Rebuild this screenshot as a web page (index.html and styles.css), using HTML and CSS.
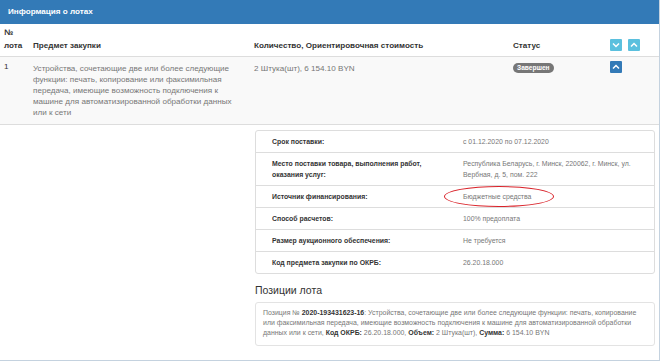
FILE: index.html
```html
<!DOCTYPE html>
<html lang="ru">
<head>
    <meta charset="UTF-8" />
    <title>Информация о лотах</title>
    <link rel="stylesheet" href="styles.css">
</head>
<body>
    <div class="panel">
        <div class="panel-heading">Информация о лотах</div>
        <table class="lots">
            <colgroup>
                <col class="c-num">
                <col class="c-subj">
                <col class="c-qty">
                <col class="c-status">
                <col class="c-act">
            </colgroup>
            <thead>
                <tr>
                    <th>№<br>лота</th>
                    <th>Предмет закупки</th>
                    <th>Количество, Ориентировочная стоимость</th>
                    <th>Статус</th>
                    <th class="act">
                        <span class="btn btn-info"><svg viewBox="0 0 10 10"><path d="M2.5 3.8 L5 6.2 L7.5 3.8"/></svg></span>
                        <span class="btn btn-info"><svg viewBox="0 0 10 10"><path d="M2.5 6.2 L5 3.8 L7.5 6.2"/></svg></span>
                    </th>
                </tr>
            </thead>
            <tbody>
                <tr class="lot-row">
                    <td class="num">1</td>
                    <td class="muted">Устройства, сочетающие две или более следующие функции: печать, копирование или факсимильная передача, имеющие возможность подключения к машине для автоматизированной обработки данных или к сети</td>
                    <td class="muted">2 Штука(шт), 6 154.10 BYN</td>
                    <td><span class="badge">Завершен</span></td>
                    <td class="act">
                        <span class="btn btn-primary up"><svg viewBox="0 0 10 10"><path d="M2.5 6.2 L5 3.8 L7.5 6.2"/></svg></span>
                    </td>
                </tr>
                <tr class="detail-row">
                    <td colspan="2"></td>
                    <td colspan="3" class="detail-cell">
                        <table class="details">
                            <tr>
                                <td class="label">Срок поставки:</td>
                                <td class="value">с 01.12.2020 по 07.12.2020</td>
                            </tr>
                            <tr>
                                <td class="label">Место поставки товара, выполнения работ, оказания услуг:</td>
                                <td class="value">Республика Беларусь, г. Минск, 220062, г. Минск, ул. Вербная, д. 5, пом. 222</td>
                            </tr>
                            <tr>
                                <td class="label">Источник финансирования:</td>
                                <td class="value marked">Бюджетные средства<span class="circle"></span></td>
                            </tr>
                            <tr>
                                <td class="label">Способ расчетов:</td>
                                <td class="value">100% предоплата</td>
                            </tr>
                            <tr>
                                <td class="label">Размер аукционного обеспечения:</td>
                                <td class="value">Не требуется</td>
                            </tr>
                            <tr>
                                <td class="label">Код предмета закупки по ОКРБ:</td>
                                <td class="value">26.20.18.000</td>
                            </tr>
                        </table>
                        <h4 class="positions-title">Позиции лота</h4>
                        <div class="position">
                            Позиция № <b>2020-193431623-16</b>: Устройства, сочетающие две или более следующие функции: печать, копирование<br>
                            или факсимильная передача, имеющие возможность подключения к машине для автоматизированной обработки<br>
                            данных или к сети, <b>Код ОКРБ:</b> 26.20.18.000, <b>Объем:</b> 2 Штука(шт), <b>Сумма:</b> 6 154.10 BYN
                        </div>
                    </td>
                </tr>
            </tbody>
        </table>
    </div>
</body>
</html>
```

FILE: styles.css
```css
body {
    margin: 0;
    font-family: "Liberation Sans", Arial, sans-serif;
    color: #333;
    background: #fff;
}

.panel {
    width: 659px;
    border-right: 1px solid #c4d2df;
    border-bottom: 1px solid #c4d2df;
    padding-bottom: 14px;
}

.panel-heading {
    background: #337ab7;
    color: #fff;
    font-weight: bold;
    font-size: 8.1px;
    height: 24px;
    line-height: 24px;
    padding: 0 8px;
}

.lots {
    width: 659px;
    table-layout: fixed;
    border-collapse: collapse;
    font-size: 8.1px;
}

.c-num { width: 29px; }
.c-subj { width: 221px; }
.c-qty { width: 259px; }
.c-status { width: 97px; }
.c-act { width: 53px; }

.lots th {
    text-align: left;
    vertical-align: bottom;
    font-weight: bold;
    line-height: 13px;
    padding: 2px 4px 4px 4px;
    border-bottom: 1px solid #ddd;
}

.lots td {
    vertical-align: top;
    padding: 6px 4px 6px 4px;
    line-height: 11px;
}

.lot-row td {
    background: #f9f9f9;
    border-bottom: 1px solid #ddd;
}

.lots td.num {
    padding-top: 4px;
}

.muted {
    color: #777;
}

.badge {
    display: inline-block;
    background: #777;
    color: #fff;
    font-size: 6.6px;
    font-weight: bold;
    line-height: 10px;
    padding: 0 4px;
    border-radius: 5px;
    vertical-align: top;
}

.btn {
    display: inline-block;
    width: 12px;
    height: 12px;
    border-radius: 1px;
    vertical-align: top;
}

.btn + .btn {
    margin-left: 4px;
}

.btn.up {
    margin-top: -2px;
}

.btn svg {
    width: 12px;
    height: 12px;
    display: block;
}

.btn path {
    fill: none;
    stroke: #fff;
    stroke-width: 1.3;
}

.btn-info {
    background: #5bc0de;
}

.btn-primary {
    background: #337ab7;
}

.detail-row td {
    padding: 0;
}

.lots td.detail-cell {
    padding: 5px 4px 0 5px;
}

.details {
    width: 100%;
    border: 1px solid #ddd;
    border-radius: 3px;
    border-collapse: separate;
    border-spacing: 0;
    font-size: 6.9px;
}

.details td {
    padding: 5px 0;
    line-height: 11px;
    border-top: 1px solid #ddd;
    vertical-align: top;
}

.details tr:first-child td {
    border-top: none;
}

.details .label {
    width: 171px;
    padding-left: 16px;
    padding-right: 20px;
    font-weight: bold;
    color: #333;
}

.details .value {
    color: #777;
    padding-right: 14px;
}

.marked {
    position: relative;
}

.circle {
    position: absolute;
    left: -19px;
    top: 0;
    width: 108px;
    height: 19px;
    border: 1.3px solid #d9232a;
    border-radius: 50%;
}

.positions-title {
    font-size: 10.5px;
    font-weight: normal;
    line-height: 16px;
    margin: 8px 0 4px 0;
    color: #333;
}

.position {
    border: 1px solid #e3e3e3;
    border-radius: 3px;
    padding: 5px 6px 7px 7px;
    font-size: 6.95px;
    line-height: 10px;
    color: #777;
    white-space: nowrap;
}

.position b {
    color: #333;
}
```
